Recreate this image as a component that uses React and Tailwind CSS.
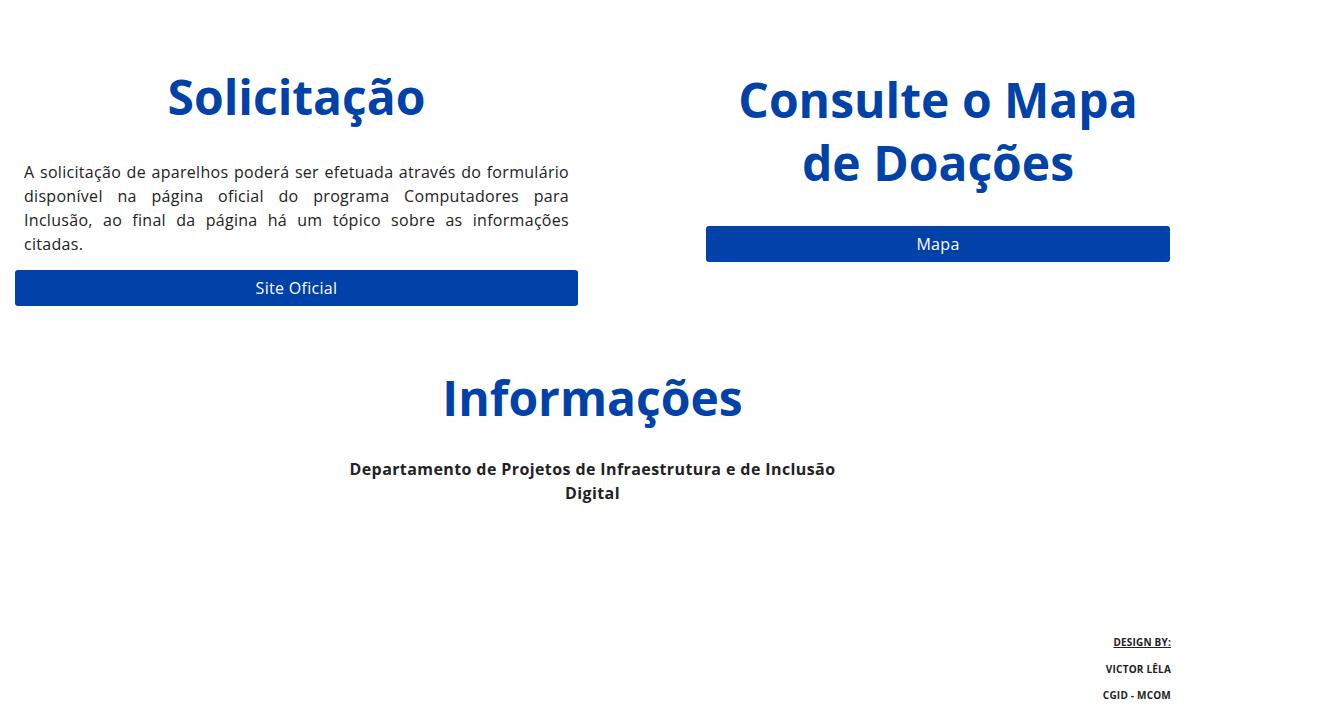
import React from 'react';

const blue = 'bg-[#0042a8]';

export default function App() {
  return (
    <div className="min-h-[718px] bg-white text-[#222] font-['Open_Sans',sans-serif]">
      {/* linha superior: solicitação + mapa */}
      <div className="flex pt-[68px]">
        <section className="w-[593px] px-[15px] flex flex-col">
          <h1 className="text-center text-[48px] leading-[58px] font-bold text-[#0042a8]">Solicitação</h1>
          <p className="mt-[34px] px-[9px] text-[16px] leading-[24px] tracking-[0.3px] text-justify text-[#222]">
            A solicitação de aparelhos poderá ser efetuada através do formulário disponível na página oficial do programa Computadores para Inclusão, ao final da página há um tópico sobre as informações citadas.
          </p>
          <a className={`mt-[14px] h-[36px] rounded-[3px] ${blue} text-white text-[16px] tracking-[0.3px] flex items-center justify-center`}>Site Oficial</a>
        </section>

        <section className="ml-[113px] w-[464px] flex flex-col">
          <h1 className="text-center text-[48px] leading-[63px] font-bold text-[#0042a8] px-[20px]">Consulte o Mapa de Doações</h1>
          <a className={`mt-[32px] h-[36px] rounded-[3px] ${blue} text-white text-[16px] tracking-[0.3px] flex items-center justify-center`}>Mapa</a>
        </section>
      </div>

      {/* informações */}
      <div className="w-[1185px] flex flex-col items-center mt-[63px]">
        <h2 className="text-[48px] leading-[58px] font-bold text-[#0042a8]">Informações</h2>
        <p className="mt-[30px] w-[520px] text-center text-[16px] leading-[24px] tracking-[0.4px] font-bold text-[#222]">
          Departamento de Projetos de Infraestrutura e de Inclusão Digital
        </p>
      </div>

      {/* créditos */}
      <div className="w-[1171px] mt-[131px] flex flex-col items-end text-[10px] tracking-[0.2px] font-bold text-[#222] gap-[13.5px] leading-[13px]">
        <span className="underline">DESIGN BY:</span>
        <span>VICTOR LÊLA</span>
        <span>CGID - MCOM</span>
      </div>
    </div>
  );
}
